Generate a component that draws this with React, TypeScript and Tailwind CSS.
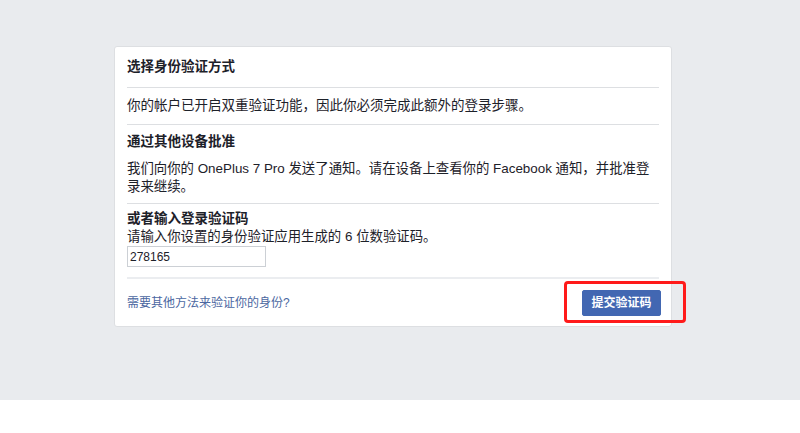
import React from "react"

const font = { fontFamily: '"Liberation Sans", "Noto Sans CJK SC", sans-serif' }

export default function App() {
    return (
        <div className="w-[800px] h-[433px] bg-white" style={font}>
            <div className="relative h-[400px] bg-[#e9ebee] pl-[114px] pt-[46px]">
                <div className="w-[558px] bg-white border border-[#dddfe2] rounded-[3px] text-[#1d2129]">
                    <div className="mx-3 h-[41px] flex items-center border-b border-[#dddfe2]">
                        <h2 className="text-[13.5px] font-bold">选择身份验证方式</h2>
                    </div>
                    <div className="mx-3 h-[37px] flex items-center border-b border-[#dddfe2] text-[13.5px]">
                        你的帐户已开启双重验证功能，因此你必须完成此额外的登录步骤。
                    </div>
                    <div className="mx-3 h-[79px] pt-[8px] border-b border-[#dddfe2] text-[13.4px]">
                        <div className="font-bold leading-[18px] text-[13.5px]">通过其他设备批准</div>
                        <p className="mt-[9px] leading-[18px]">
                            我们向你的 OnePlus 7 Pro 发送了通知。请在设备上查看你的 Facebook 通知，并批准登录来继续。
                        </p>
                    </div>
                    <div className="mx-3 h-[75px] pt-[6px] border-b-2 border-[#ebedf0] text-[13.4px]">
                        <div className="font-bold leading-[18px] text-[13.5px]">或者输入登录验证码</div>
                        <div className="leading-[18px]">请输入你设置的身份验证应用生成的 6 位数验证码。</div>
                        <input
                            readOnly
                            value="278165"
                            className="w-[139px] h-[21px] border border-[#ccd0d5] px-[2px] text-[12px] text-[#1d2129] outline-none"
                        />
                    </div>
                    <div className="h-[47px] pl-3 pr-[10px] flex items-center justify-between">
                        <a href="#" className="text-[12px] text-[#4b67a1]">需要其他方法来验证你的身份?</a>
                        <button className="w-[79px] h-[26px] bg-[#4267b2] border border-[#4267b2] rounded-[2px] text-white text-[12px] font-bold">
                            提交验证码
                        </button>
                    </div>
                </div>
                <div className="absolute left-[564px] top-[281px] w-[122px] h-[42px] border-[3px] border-[#ff1a1a] rounded-[4px]"></div>
            </div>
        </div>
    )
}
